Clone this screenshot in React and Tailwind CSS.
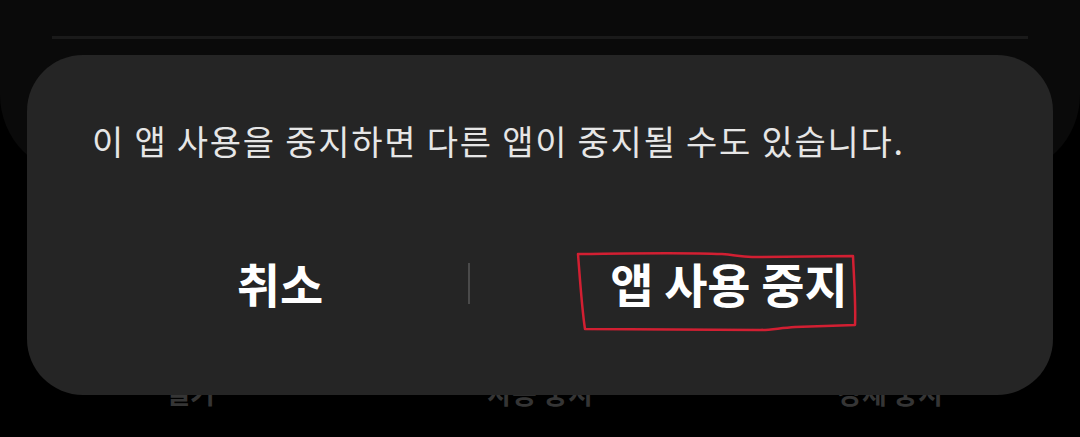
import React from 'react';

const font = { fontFamily: '"Noto Sans CJK KR", "Noto Sans", sans-serif' };

const App = () => {
	return (
		<div className="relative w-[1080px] h-[437px] overflow-hidden bg-black" style={font}>
			{/* page behind the dialog */}
			<div className="h-[175px] rounded-b-[80px] bg-[#0a0a0a] pt-[36px] px-[52px]">
				<div className="h-[3px] bg-[#1a1a1a]" />
			</div>
			<div className="mt-[198px] grid grid-cols-3 px-[15px] text-[27px] leading-[40px] font-semibold text-[#353535]">
				<div className="text-center">열기</div>
				<div className="text-center">사용 중지</div>
				<div className="text-center">강제 중지</div>
			</div>

			{/* dialog */}
			<div className="absolute left-[27px] top-[55px] w-[1026px] h-[340px] rounded-[56px] bg-[#252525] px-[65px] pt-[66px]">
				<p className="text-[34px] leading-[40px] tracking-[1.75px] text-[#e6e6e6] whitespace-nowrap">
					이 앱 사용을 중지하면 다른 앱이 중지될 수도 있습니다.
				</p>
				<div className="mt-[82px] flex items-center h-[80px]">
					<button className="w-[376px] text-center text-[47px] font-bold text-white">취소</button>
					<div className="w-[2px] h-[41px] bg-[#4a4a4a]" />
					<button className="flex-1 text-center text-[47px] font-bold text-white">앱 사용 중지</button>
				</div>
			</div>

			{/* red marker annotation */}
			<svg className="absolute inset-0" width="1080" height="437" viewBox="0 0 1080 437" fill="none">
				<path
					d="M578,254 C640,253 700,253 722,254 C735,255 740,257 752,257 L853,256 C854,280 856,305 855,325 L795,327 C780,328 770,330 760,330 L585,329 C582,310 580,280 578,254 Z"
					stroke="#d21f32"
					strokeWidth="2.5"
					strokeLinejoin="round"
				/>
			</svg>
		</div>
	);
};

export default App;
